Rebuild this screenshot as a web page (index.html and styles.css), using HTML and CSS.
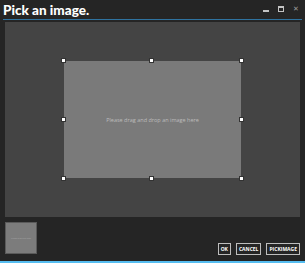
FILE: index.html
```html
<!DOCTYPE html>
<html lang="en">
<head>
  <meta charset="UTF-8">
  <title>Pick an image.</title>
  <link rel="stylesheet" href="styles.css">
</head>
<body>
  <div class="window">
    <header class="titlebar">
      <h1 class="title">Pick an image.</h1>
      <div class="controls">
        <span class="ctl min"></span>
        <span class="ctl max"></span>
        <span class="ctl close">✕</span>
      </div>
    </header>

    <div class="stage">
      <div class="drop">
        <p class="hint">Please drag and drop an image here</p>
        <span class="handle tl"></span>
        <span class="handle tc"></span>
        <span class="handle tr"></span>
        <span class="handle ml"></span>
        <span class="handle mr"></span>
        <span class="handle bl"></span>
        <span class="handle bc"></span>
        <span class="handle br"></span>
      </div>
    </div>

    <footer class="bottom">
      <div class="thumb"><span class="thumb-text">Please drag and drop</span></div>
      <div class="buttons">
        <button class="btn">OK</button>
        <button class="btn">CANCEL</button>
        <button class="btn">PICKIMAGE</button>
      </div>
    </footer>
  </div>
</body>
</html>
```

FILE: styles.css
```css
body {
  margin: 0;
  background: #252525;
  font-family: 'Open Sans', 'DejaVu Sans', sans-serif;
  color: #fff;
}
.window {
  width: 305px;
  height: 263px;
  display: flex;
  flex-direction: column;
  box-sizing: border-box;
  border-bottom: 2px solid #56bdf0;
}
.titlebar {
  display: flex;
  justify-content: space-between;
  align-items: flex-start;
  height: 19px;
  margin: 0 3px;
  border-bottom: 1px solid #2f73a0;
}
.title {
  margin: 0;
  font-family: Lato, 'Open Sans', sans-serif;
  font-size: 13.5px;
  font-weight: 900;
  line-height: 20px;
}
.controls {
  display: flex;
  align-items: center;
  gap: 9px;
  padding-top: 5px;
  padding-right: 2px;
}
.ctl {
  display: block;
  width: 6px;
  height: 6px;
  box-sizing: border-box;
}
.min {
  height: 2px;
  margin-top: 5px;
  background: #c4c4c4;
}
.max {
  border: 1px solid #c4c4c4;
  border-top-width: 2px;
}
.close {
  width: 7px;
  font-size: 7px;
  line-height: 6px;
  color: #9c9c9c;
}
.stage {
  margin: 2px 5px 0;
  height: 195px;
  background: #444;
  display: flex;
  align-items: center;
  justify-content: center;
}
.drop {
  position: relative;
  width: 177px;
  height: 117px;
  background: #7a7a7a;
  display: flex;
  align-items: center;
  justify-content: center;
}
.hint {
  margin: 0;
  font-size: 5.5px;
  color: #bcbcbc;
}
.handle {
  position: absolute;
  width: 3px;
  height: 3px;
  background: #fff;
  border: 1px solid #333;
}
.tl, .tc, .tr { top: -3px; }
.bl, .bc, .br { bottom: -3px; }
.ml, .mr { top: 56px; }
.tl, .ml, .bl { left: -3px; }
.tr, .mr, .br { right: -3px; }
.tc, .bc { left: 85px; }
.bottom {
  flex: 1;
  display: flex;
  justify-content: space-between;
  align-items: flex-end;
  padding: 5px 5px 6px;
}
.thumb {
  align-self: flex-start;
  width: 32px;
  height: 32px;
  box-sizing: border-box;
  background: #7c7c7c;
  border: 1px solid #5a5a5a;
  display: flex;
  align-items: center;
  justify-content: center;
}
.thumb-text {
  font-size: 2px;
  color: #aaa;
}
.buttons {
  display: flex;
  gap: 5px;
}
.btn {
  height: 12px;
  padding: 0 2px;
  background: #252525;
  border: 1px solid #bdbdbd;
  color: #fff;
  font-family: 'Open Sans', sans-serif;
  font-size: 5px;
  font-weight: 700;
  line-height: 10px;
}
```
